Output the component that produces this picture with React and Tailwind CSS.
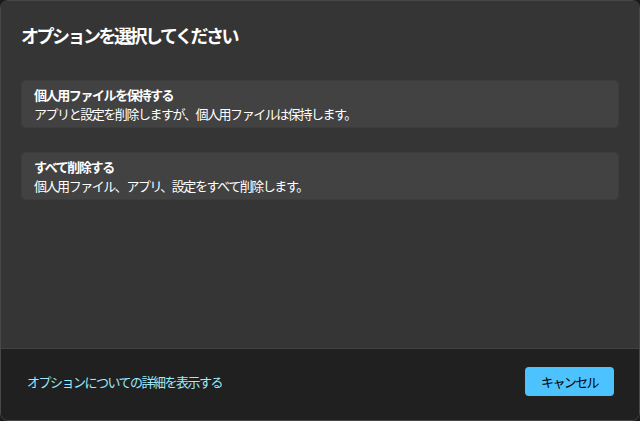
export default function App() {
  const options = [
    { title: "個人用ファイルを保持する", desc: "アプリと設定を削除しますが、個人用ファイルは保持します。" },
    { title: "すべて削除する", desc: "個人用ファイル、アプリ、設定をすべて削除します。" },
  ];

  return (
    <div
      className="w-[640px] h-[421px] bg-[#1c1c1c] overflow-hidden"
      style={{ fontFamily: '"Noto Sans CJK JP", "Noto Sans", sans-serif' }}
    >
      <div className="h-full flex flex-col rounded-[8px] border border-[#484848] overflow-hidden">
        <div className="flex-1 bg-[#353535] px-5 pt-[20px]">
          <h1 className="text-[18px] leading-[28px] font-semibold tracking-[-2.5px] text-white">オプションを選択してください</h1>
          <div className="mt-[31px] flex flex-col gap-6">
            {options.map((o) => (
              <div key={o.title} className="bg-[#424242] rounded-[4px] px-3 py-[4px] border border-[#3d3d3d]">
                <div className="text-[13px] leading-[19px] font-bold tracking-[-1.4px] text-white">{o.title}</div>
                <div className="text-[13px] leading-[19px] tracking-[-1.45px] text-white">{o.desc}</div>
              </div>
            ))}
          </div>
        </div>
        <div className="h-[72px] bg-[#202020] border-t border-[#404040] flex items-center justify-between pl-[26px] pr-[25px] pb-[6px]">
          <a className="text-[13px] tracking-[-1.5px] text-[#99ebff] cursor-pointer">オプションについての詳細を表示する</a>
          <button className="w-[89px] h-[29px] rounded-[4px] bg-[#4cc2ff] text-[13px] tracking-[-1.6px] text-black">キャンセル</button>
        </div>
      </div>
    </div>
  );
}
